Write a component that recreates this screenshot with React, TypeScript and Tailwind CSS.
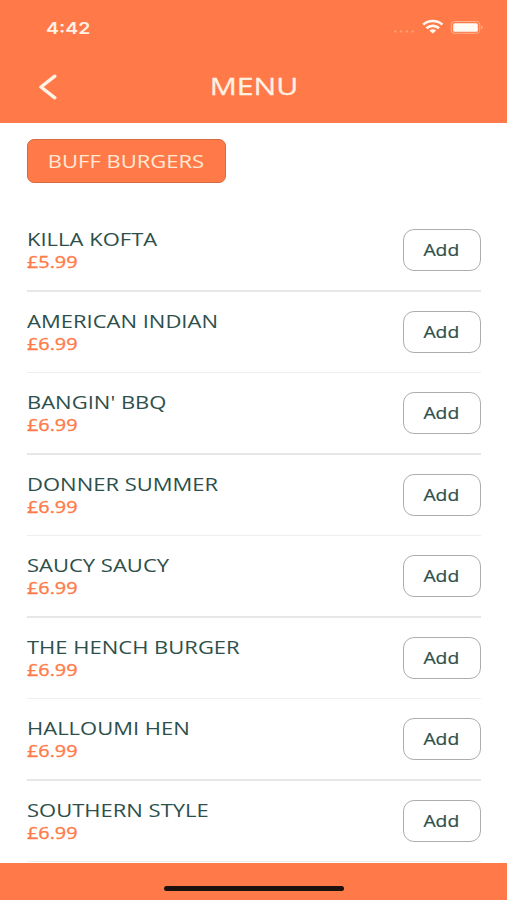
type MenuItem = {
  name: string;
  price: string;
};

const items: MenuItem[] = [
  { name: "KILLA KOFTA", price: "£5.99" },
  { name: "AMERICAN INDIAN", price: "£6.99" },
  { name: "BANGIN' BBQ", price: "£6.99" },
  { name: "DONNER SUMMER", price: "£6.99" },
  { name: "SAUCY SAUCY", price: "£6.99" },
  { name: "THE HENCH BURGER", price: "£6.99" },
  { name: "HALLOUMI HEN", price: "£6.99" },
  { name: "SOUTHERN STYLE", price: "£6.99" },
];

function StatusBar() {
  return (
    <div className="flex h-[54px] items-center justify-between pl-[46px] pr-[23px]">
      <span className="inline-block origin-left scale-x-[1.22] pt-px font-['Inter',sans-serif] text-[16px] font-semibold leading-none text-[#fff1e6]">
        4:42
      </span>
      <svg width="91" height="16" viewBox="0 0 91 16" fill="none">
        <g fill="#ffa077">
          <circle cx="2.3" cy="12.4" r="1.2" />
          <circle cx="8.1" cy="12.4" r="1.2" />
          <circle cx="13.9" cy="12.4" r="1.2" />
          <circle cx="19.7" cy="12.4" r="1.2" />
        </g>
        <g stroke="#fff8f2" strokeWidth="2.6">
          <path d="M30.2 5.6c5.4-4.8 13.8-4.8 19.2 0" />
          <path d="M33.5 9.2c3.6-3.1 9-3.1 12.6 0" />
        </g>
        <path d="M36.4 11.4c1.9-1.6 4.9-1.6 6.8 0l-3.4 3z" fill="#fff8f2" />
        <rect x="58.3" y="2.5" width="28.4" height="11.8" rx="3" stroke="#ffb08c" />
        <rect x="60.2" y="4.2" width="24.6" height="8.6" rx="1.6" fill="#fffaf4" />
        <path d="M88.2 6.6c1.8.7 1.8 3 0 3.7z" fill="#ffb999" />
      </svg>
    </div>
  );
}

function Header() {
  return (
    <header className="h-[123px] bg-[#ff7a48]">
      <StatusBar />
      <div className="grid h-[66px] grid-cols-[1fr_auto_1fr] items-center">
        <button type="button" aria-label="Back" className="ml-[38px] w-5">
          <svg width="20" height="26" viewBox="0 0 20 26" fill="none">
            <path d="M16.8 2.2 3 13l13.8 10.8" stroke="#fff3e8" strokeWidth="3.4" strokeLinecap="round" strokeLinejoin="round" />
          </svg>
        </button>
        <h1 className="scale-x-[1.23] pb-0.5 text-[24.5px] leading-none text-[#fff1e4] [-webkit-text-stroke:0.3px]">MENU</h1>
        <span />
      </div>
    </header>
  );
}

function MenuRow({ item }: { item: MenuItem }) {
  return (
    <li className="group flex h-[81.5px] flex-col">
      <div className="flex flex-1 items-center justify-between">
        <div className="pt-px">
          <p className="origin-left scale-x-[1.222] whitespace-nowrap text-[18px] leading-[22px] text-[#2d4f4a]">{item.name}</p>
          <p className="origin-left scale-x-[1.2] whitespace-nowrap pt-px text-[16.5px] leading-[22px] text-[#ff7a48] [-webkit-text-stroke:0.35px]">{item.price}</p>
        </div>
        <button
          type="button"
          className="flex h-[42px] w-[78.5px] items-center justify-center rounded-[11px] border-[1.5px] border-[#adadad] text-[16.5px] text-[#2d4f4a]"
        >
          <span className="scale-x-[1.17] pt-0.5 [-webkit-text-stroke:0.2px]">Add</span>
        </button>
      </div>
      <div className="h-px bg-[#eeeeee] group-odd:h-[2px] group-odd:bg-[#e7e7e7]" />
    </li>
  );
}

export default function App() {
  return (
    <div className="flex h-[900px] w-[507px] flex-col overflow-hidden bg-white font-['Open_Sans',sans-serif]">
      <Header />
      <main className="flex-1 pl-[26.5px] pr-[26px] pt-4">
        <div className="flex h-11 w-[199px] items-center justify-center rounded-[7px] border border-[#d66b42] bg-[#ff7a48] text-[18px] text-[#ffe9d6]">
          <span className="scale-x-[1.222] whitespace-nowrap">BUFF BURGERS</span>
        </div>
        <ul className="mt-[27px]">
          {items.map((item) => (
            <MenuRow key={item.name} item={item} />
          ))}
        </ul>
      </main>
      <footer className="flex h-[37px] shrink-0 justify-center bg-[#ff7a48] pl-px pt-[23px]">
        <div className="h-[5px] w-[180px] rounded-full bg-[#1c110c]" />
      </footer>
    </div>
  );
}
